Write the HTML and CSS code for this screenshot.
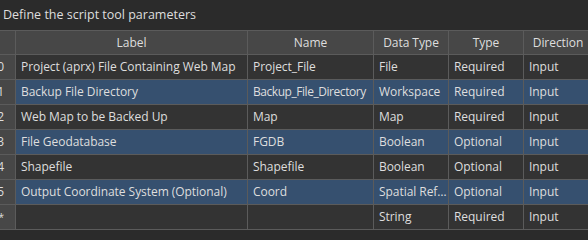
FILE: index.html
```html
<!DOCTYPE html>
<html lang="en">
<head>
    <meta charset="UTF-8">
    <title>Define the script tool parameters</title>
    <link rel="stylesheet" href="styles.css">
</head>
<body>
    <div class="title">Define the script tool parameters</div>

    <div class="grid-view">
        <div class="grid">
            <div class="row head">
                <div class="cell num"></div>
                <div class="cell">Label</div>
                <div class="cell">Name</div>
                <div class="cell">Data Type</div>
                <div class="cell">Type</div>
                <div class="cell">Direction</div>
            </div>
            <div class="row">
                <div class="cell num">0</div>
                <div class="cell">Project (aprx) File Containing Web Map</div>
                <div class="cell">Project_File</div>
                <div class="cell">File</div>
                <div class="cell">Required</div>
                <div class="cell">Input</div>
            </div>
            <div class="row selected">
                <div class="cell num">1</div>
                <div class="cell">Backup File Directory</div>
                <div class="cell tight">Backup_File_Directory</div>
                <div class="cell">Workspace</div>
                <div class="cell">Required</div>
                <div class="cell">Input</div>
            </div>
            <div class="row">
                <div class="cell num">2</div>
                <div class="cell">Web Map to be Backed Up</div>
                <div class="cell">Map</div>
                <div class="cell">Map</div>
                <div class="cell">Required</div>
                <div class="cell">Input</div>
            </div>
            <div class="row selected">
                <div class="cell num">3</div>
                <div class="cell">File Geodatabase</div>
                <div class="cell">FGDB</div>
                <div class="cell">Boolean</div>
                <div class="cell">Optional</div>
                <div class="cell">Input</div>
            </div>
            <div class="row">
                <div class="cell num">4</div>
                <div class="cell">Shapefile</div>
                <div class="cell">Shapefile</div>
                <div class="cell">Boolean</div>
                <div class="cell">Optional</div>
                <div class="cell">Input</div>
            </div>
            <div class="row selected">
                <div class="cell num">5</div>
                <div class="cell">Output Coordinate System (Optional)</div>
                <div class="cell">Coord</div>
                <div class="cell">Spatial Reference</div>
                <div class="cell">Optional</div>
                <div class="cell">Input</div>
            </div>
            <div class="row">
                <div class="cell num star">*</div>
                <div class="cell"></div>
                <div class="cell"></div>
                <div class="cell">String</div>
                <div class="cell">Required</div>
                <div class="cell">Input</div>
            </div>
        </div>
    </div>
</body>
</html>
```

FILE: styles.css
```css
:root {
    --bg-color: #2b2b2b;
    --row-color: #333333;
    --head-color: #474747;
    --line-color: #5b5b5b;
    --selected-color: #36506f;
    --text-color: #dedede;
}

* {
    box-sizing: border-box;
    margin: 0;
    padding: 0;
}

body {
    font-family: 'Open Sans', 'Segoe UI', sans-serif;
    font-size: 12px;
    color: var(--text-color);
    background-color: var(--bg-color);
    overflow: hidden;
}

.title {
    height: 30px;
    padding: 6px 3px 0;
    font-size: 12.5px;
}

.grid-view {
    overflow: hidden;
}

/* scrolled a little to the right, so the row numbers are cut */
.grid {
    display: flex;
    flex-direction: column;
    gap: 1px;
    width: 613px;
    margin-left: -21px;
    background-color: var(--line-color);
    border-top: 1px solid var(--line-color);
    border-bottom: 1px solid var(--line-color);
}

.row {
    display: grid;
    grid-template-columns: 36px 231px 125px 74px 74px 1fr;
    gap: 1px;
    height: 24px;
}

.cell {
    background-color: var(--row-color);
    padding: 0 1px 0 5px;
    line-height: 24px;
    letter-spacing: -0.05px;
    white-space: nowrap;
    overflow: hidden;
    text-overflow: ellipsis;
}

/* long name has to fit the column */
.cell.tight {
    letter-spacing: -0.45px;
    padding-right: 0;
}

.head {
    height: 23px;
}

.head .cell {
    background-color: var(--head-color);
    text-align: center;
    line-height: 23px;
    padding: 0 3px;
}

.cell.num {
    background-color: var(--head-color);
    text-align: right;
    padding-right: 11px;
}

.star {
    font-size: 10px;
}

.selected .cell {
    background-color: var(--selected-color);
}

.selected .cell.num {
    background-color: var(--head-color);
}
```
